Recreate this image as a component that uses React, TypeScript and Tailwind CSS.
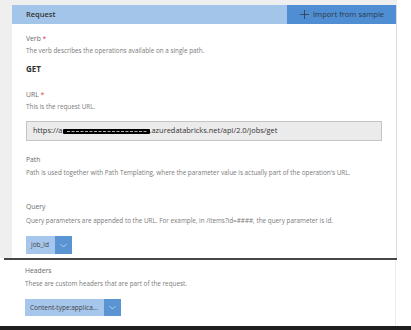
import React from 'react'

const font = { fontFamily: '"Open Sans", "Noto Sans", sans-serif' }

function Chevron() {
  return (
    <svg width="7" height="5" viewBox="0 0 7 5" fill="none">
      <path d="M0.5 1 L3.5 4 L6.5 1" stroke="#c9dcf2" strokeWidth="0.8" />
    </svg>
  )
}

function Dropdown({ label, left }: { label: string; left: string }) {
  return (
    <div className="flex h-full">
      <div className={`flex items-center bg-[#a6c7eb] pl-[5px] text-[6.5px] text-[#444] ${left}`}>{label}</div>
      <div className="flex w-[17px] items-center justify-center bg-[#5a94d3]">
        <Chevron />
      </div>
    </div>
  )
}

function Label({ text, req }: { text: string; req?: boolean }) {
  return (
    <div className="h-[10px] leading-[10px] text-[6.8px] text-[#6b6b6b]">
      {text}
      {req && <span className="text-[#d44]"> *</span>}
    </div>
  )
}

function Desc({ text, className = '' }: { text: string; className?: string }) {
  return <div className={`h-[10px] leading-[10px] text-[6.35px] text-[#7a7a7a] ${className}`}>{text}</div>
}

export default function App() {
  return (
    <div className="relative h-[330px] w-[411px] overflow-hidden bg-white" style={font}>
      {/* upper panel */}
      <div className="flex h-[258px]">
        <div className="w-[397px] bg-[#efefef] pl-[12px] pt-[5px]">
          <div className="flex h-[253px] flex-col border-r border-[#dcdcdc] bg-white">
            <div className="flex h-[19px]">
              <div className="flex flex-1 items-center bg-[#a3c5e9] pl-[14px] text-[7.5px] font-semibold text-[#333]">
                Request
              </div>
              <div className="flex w-[109px] items-center gap-[4px] bg-[#4f8ed2] pl-[13px] text-[7.6px] text-[#2c3a4a]">
                <svg width="9" height="9" viewBox="0 0 9 9">
                  <path d="M4.5 0 V9 M0 4.5 H9" stroke="#2c3a4a" strokeWidth="0.8" />
                </svg>
                Import from sample
              </div>
            </div>
            <div className="flex flex-col pl-[14px] pt-[10px]">
              <Label text="Verb" req />
              <Desc text="The verb describes the operations available on a single path." className="mt-[2px]" />
              <div className="mt-[7px] h-[12px] leading-[12px] text-[8px] font-bold text-[#333]">GET</div>
              <div className="mt-[15px]">
                <Label text="URL" req />
              </div>
              <Desc text="This is the request URL." className="mt-[2px]" />
              <div className="mt-[9px] flex h-[20px] w-[356px] items-center border border-[#c4c4c4] bg-[#ebebeb] pl-[6px] text-[7.45px] text-[#333]">
                https://a
                <span className="relative inline-flex h-[5px] w-[87px] items-center rounded-[1px] bg-black">
                  <svg width="87" height="5" viewBox="0 0 87 5" className="absolute left-0 top-0">
                    <path d="M4 2.5 H84" stroke="#fff" strokeWidth="0.7" strokeDasharray="3 1.5" />
                  </svg>
                </span>
                .azuredatabricks.net/api/2.0/jobs/get
              </div>
              <div className="mt-[14px]">
                <Label text="Path" />
              </div>
              <Desc
                text="Path is used together with Path Templating, where the parameter value is actually part of the operation's URL."
                className="mt-[3px]"
              />
              <div className="mt-[24px]">
                <Label text="Query" />
              </div>
              <Desc
                text="Query parameters are appended to the URL. For example, in /items?id=####, the query parameter is id."
                className="mt-[4px]"
              />
              <div className="mt-[10px] h-[18px]">
                <Dropdown label="job_id" left="w-[29px]" />
              </div>
            </div>
          </div>
        </div>
        <div className="flex-1 bg-white" />
      </div>
      {/* divider */}
      <div className="ml-[4px] h-[2px] w-[393px] bg-[#464646]" />
      {/* lower panel */}
      <div className="flex h-[66px] w-[396px] flex-col border-r border-[#ececec] pl-[25px] pt-[6px]">
        <Label text="Headers" />
        <Desc text="These are custom headers that are part of the request." className="mt-[3px]" />
        <div className="mt-[10px] h-[17px]">
          <Dropdown label="Content-type:applica..." left="w-[79px]" />
        </div>
      </div>
      <div className="h-[4px] bg-[#1f1f1f]" />
    </div>
  )
}
